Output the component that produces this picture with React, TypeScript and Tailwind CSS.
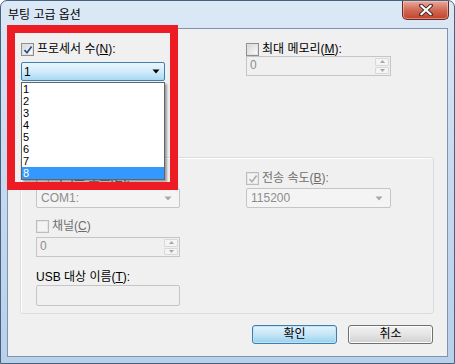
import type { ReactNode } from "react";

function Check({ checked, disabled }: { checked?: boolean; disabled?: boolean }) {
  return (
    <span
      className={`flex h-[13px] w-[13px] shrink-0 items-center justify-center border ${
        disabled ? "border-[#bcbcbc]" : "border-[#8e8f8f]"
      } bg-white`}
    >
      <span
        className={`relative flex h-[11px] w-[11px] items-center justify-center border ${
          disabled ? "border-[#e6e6e6] bg-[#f4f4f4]" : "border-[#e2e2e2] bg-linear-to-br from-[#d8d8d8] to-[#fbfbfb]"
        }`}
      >
        {checked ? (
          <svg width="10" height="10" viewBox="0 0 10 10" className="absolute">
            <path
              d="M1.5 5.2 L4 7.8 L8.6 1.4"
              fill="none"
              stroke={disabled ? "#b0b0b0" : "#2b4c8c"}
              strokeWidth="1.7"
            />
          </svg>
        ) : null}
      </span>
    </span>
  );
}

function Mn({ children }: { children: ReactNode }) {
  return <span className="underline underline-offset-[1px]">{children}</span>;
}

function CheckRow({
  checked,
  disabled,
  children,
}: {
  checked?: boolean;
  disabled?: boolean;
  children: ReactNode;
}) {
  return (
    <div className="flex h-[13px] items-center gap-[3px]">
      <Check checked={checked} disabled={disabled} />
      <span className={`leading-[13px] ${disabled ? "text-[#6d6d6d]" : "text-black"}`}>{children}</span>
    </div>
  );
}

function Arrow({ color }: { color: string }) {
  return (
    <svg width="8" height="5" viewBox="0 0 8 5">
      <path d="M0.5 0.5 L7.5 0.5 L4 4.5 Z" fill={color} />
    </svg>
  );
}

function DisabledCombo({ value, width }: { value: string; width: string }) {
  return (
    <div
      className={`flex h-[20px] ${width} items-center justify-between rounded-[2px] border border-[#c5c5c5] bg-[#f4f4f4] pl-[4px] pr-[7px] text-[#8d8d8d]`}
    >
      <span className="leading-[14px]">{value}</span>
      <Arrow color="#a8a8a8" />
    </div>
  );
}

function Spin({ value, width }: { value: string; width: string }) {
  return (
    <div className={`flex h-[20px] ${width} border border-[#c5c5c5] bg-[#f0f0f0]`}>
      <span className="flex-1 pl-[3px] leading-[17px] text-[#8d8d8d]">{value}</span>
      <div className="flex w-[16px] flex-col gap-[1px] p-[1px]">
        <div className="flex flex-1 items-center justify-center rounded-[1px] border border-[#d8d8d8] bg-[#f4f4f4]">
          <svg width="5" height="3" viewBox="0 0 5 3">
            <path d="M0 3 L2.5 0 L5 3 Z" fill="#a8a8a8" />
          </svg>
        </div>
        <div className="flex flex-1 items-center justify-center rounded-[1px] border border-[#d8d8d8] bg-[#f4f4f4]">
          <svg width="5" height="3" viewBox="0 0 5 3">
            <path d="M0 0 L5 0 L2.5 3 Z" fill="#a8a8a8" />
          </svg>
        </div>
      </div>
    </div>
  );
}

function Button({ children, primary }: { children: ReactNode; primary?: boolean }) {
  return (
    <div
      className={`flex h-[19px] w-[85px] items-center justify-center rounded-[3px] border ${
        primary
          ? "border-[#3c7fb1] bg-linear-to-b from-[#e5f4fc] via-[#c4e5f6] to-[#98d1ef] shadow-[inset_0_0_0_1px_#bfe4f8]"
          : "border-[#707070] bg-linear-to-b from-[#f2f2f2] via-[#e4e4e4] to-[#d0d0d0] shadow-[inset_0_0_0_1px_#fcfcfc]"
      } leading-[13px]`}
    >
      {children}
    </div>
  );
}

export default function App() {
  const items = ["1", "2", "3", "4", "5", "6", "7", "8"];
  return (
    <div className="relative h-[364px] w-[455px] overflow-hidden rounded-t-[7px] border border-[#47617f] bg-linear-to-b from-[#dbe8f6] via-[#c6d9ef] to-[#b9d0eb] font-['Liberation_Sans','Noto_Sans_CJK_KR',sans-serif] text-[12px] text-black">
      {/* title bar */}
      <div className="flex h-[27px] items-start justify-between">
        <div className="pl-[7px] pt-[7px] leading-[14px] text-black">부팅 고급 옵션</div>
        <div className="mr-[5px] flex h-[19px] w-[47px] items-center justify-center rounded-b-[5px] border border-t-0 border-[#6b2a20] bg-linear-to-b from-[#e9a99c] via-[#d16a55] to-[#c2412a] shadow-[inset_0_0_0_1px_rgba(255,220,210,0.45)]">
          <svg width="16" height="12" viewBox="0 0 16 12">
            <path d="M3 1.5 L13 10.5 M13 1.5 L3 10.5" stroke="#4a2a2a" strokeWidth="4" strokeLinecap="round" />
            <path d="M3.3 1.8 L12.7 10.2 M12.7 1.8 L3.3 10.2" stroke="#ffffff" strokeWidth="2.2" strokeLinecap="round" />
          </svg>
        </div>
      </div>

      {/* client area */}
      <div className="relative mx-[6px] flex h-[329px] flex-col border border-[#7d93ae] bg-[#f0f0f0] px-[12px] pt-[14px]">
        <div className="flex">
          <div className="ml-[1px] flex w-[144px] flex-col">
            <CheckRow checked>
              프로세서 수(<Mn>N</Mn>):
            </CheckRow>
            <div className="mt-[6px] flex h-[19px] items-center justify-between rounded-[2px] border border-[#3c7fb1] bg-linear-to-b from-[#eaf6fd] via-[#d2ecfa] to-[#a8d8f3] pl-[2px] pr-[4px]">
              <span className="leading-[14px]">1</span>
              <Arrow color="#000000" />
            </div>
          </div>
          <div className="ml-[81px] flex w-[145px] flex-col">
            <CheckRow>
              최대 메모리(<Mn>M</Mn>):
            </CheckRow>
            <Spin value="0" width="w-[145px]" />
          </div>
        </div>

        {/* debug group */}
        <div className="relative mt-[76px] flex h-[157px] w-[414px] flex-col rounded-[3px] border border-[#d5dfe5] px-[15px] pt-[14px] shadow-[inset_1px_1px_0_#ffffff]">
          <div className="absolute left-[8px] top-[-7px] bg-[#f0f0f0] px-[2px]">
            <CheckRow checked>
              디버그(<Mn>G</Mn>)
            </CheckRow>
          </div>
          <div className="flex">
            <div className="flex w-[144px] flex-col">
              <CheckRow disabled>
                디버그 포트(<Mn>E</Mn>):
              </CheckRow>
              <div className="mt-[3px]">
                <DisabledCombo value="COM1:" width="w-[144px]" />
              </div>
            </div>
            <div className="ml-[66px] flex w-[145px] flex-col">
              <CheckRow checked disabled>
                전송 속도(<Mn>B</Mn>):
              </CheckRow>
              <div className="mt-[3px]">
                <DisabledCombo value="115200" width="w-[145px]" />
              </div>
            </div>
          </div>
          <div className="mt-[12px] flex w-[144px] flex-col">
            <CheckRow disabled>
              채널(<Mn>C</Mn>)
            </CheckRow>
            <div className="mt-[4px]">
              <Spin value="0" width="w-[144px]" />
            </div>
          </div>
          <div className="mt-[13px] leading-[14px]">
            USB 대상 이름(<Mn>T</Mn>):
          </div>
          <div className="mt-[1px] h-[21px] w-[144px] rounded-[2px] border border-[#c5c5c5] bg-[#f0f0f0]" />
        </div>

        <div className="mr-[2px] mt-[11px] flex justify-end gap-[11px]">
          <Button primary>확인</Button>
          <Button>취소</Button>
        </div>

        {/* open dropdown list */}
        <div className="absolute left-[13px] top-[53px] flex w-[144px] flex-col border border-[#646464] bg-white shadow-[2px_2px_2px_rgba(0,0,0,0.35)]">
          {items.map((n) => (
            <div
              key={n}
              className={`flex h-[12px] items-center overflow-hidden pl-[1px] text-[11px] leading-[11px] ${
                n === "8" ? "bg-[#3399ff] text-white" : "text-black"
              }`}
            >
              {n}
            </div>
          ))}
        </div>
      </div>

      {/* red annotation frame */}
      <div className="absolute left-[6px] top-[24px] h-[165px] w-[171px] border-[8px] border-[#ed1c24]" />
    </div>
  );
}
